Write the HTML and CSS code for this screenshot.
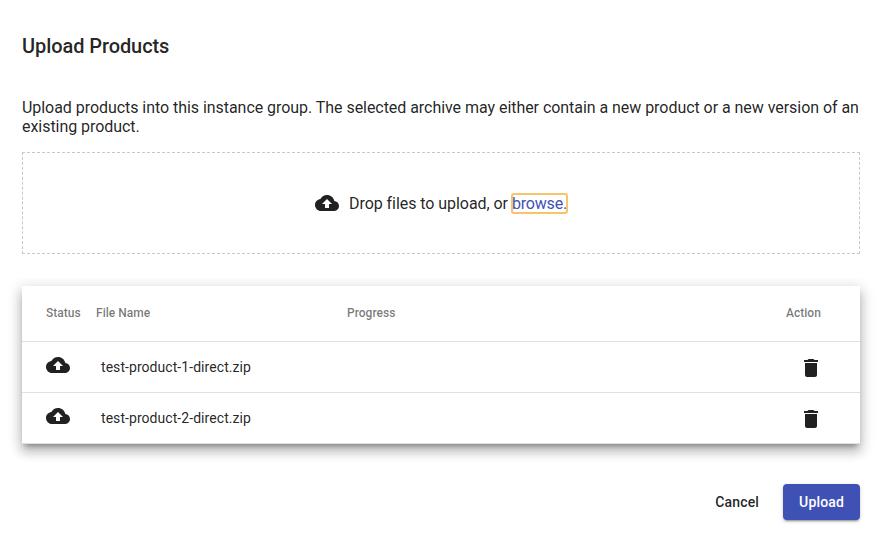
FILE: index.html
```html
<!DOCTYPE html>
<html lang="en">
<head>
<meta charset="utf-8">
<title>Upload Products</title>
<link rel="stylesheet" href="styles.css">
</head>
<body>
<svg class="defs" width="0" height="0" aria-hidden="true">
  <symbol id="cloud" viewBox="0 0 24 24"><path d="M19.35 10.04C18.67 6.59 15.64 4 12 4 9.11 4 6.6 5.64 5.35 8.04 2.34 8.36 0 10.91 0 14c0 3.31 2.69 6 6 6h13c2.76 0 5-2.24 5-5 0-2.64-2.05-4.78-4.65-4.96zM14 13v4h-4v-4H7l5-5 5 5h-3z"/></symbol>
  <symbol id="trash" viewBox="0 0 24 24"><path d="M6 19c0 1.100.9 2 2 2h8c1.100 0 2-.9 2-2V7H6v12zM19 4h-3.500l-1-1h-5l-1 1H5v2h14V4z"/></symbol>
</svg>
<main class="dialog">
  <h1 class="title">Upload Products</h1>
  <p class="intro">Upload products into this instance group. The selected archive may either contain a new product or a new version of an existing product.</p>
  <div class="dropzone">
    <svg class="icon"><use href="#cloud"/></svg>
    <span class="hint">Drop files to upload, or <a class="browse">browse.</a></span>
  </div>
  <section class="files">
    <div class="row head"><span>Status</span><span>File Name</span><span>Progress</span><span>Action</span></div>
    <div class="row"><svg class="icon"><use href="#cloud"/></svg><span class="name">test-product-1-direct.zip</span><span></span><button class="delete" aria-label="Delete"><svg class="icon"><use href="#trash"/></svg></button></div>
    <div class="row"><svg class="icon"><use href="#cloud"/></svg><span class="name">test-product-2-direct.zip</span><span></span><button class="delete" aria-label="Delete"><svg class="icon"><use href="#trash"/></svg></button></div>
  </section>
  <footer class="actions">
    <button class="button">Cancel</button>
    <button class="button primary">Upload</button>
  </footer>
</main>
</body>
</html>
```
FILE: styles.css
```css
* { box-sizing: border-box; }
body { margin: 0; background: #fff; color: rgba(0,0,0,.87); font-family: Roboto, sans-serif; }
.defs { position: absolute; }
.dialog { display: flex; flex-direction: column; padding: 30px 23px 22px 22px; height: 542px; }
.title { margin: 0 0 36px; font-size: 20px; line-height: 32px; font-weight: 500; letter-spacing: -.08px; }
.intro { margin: 0 0 16px; font-size: 16px; line-height: 19px; letter-spacing: -.048px; }
.dropzone { display: flex; align-items: center; justify-content: center; gap: 10px; height: 102px; border: 1px dashed #c8c8c8; font-size: 16px; line-height: 19px; letter-spacing: -.055px; }
.icon { display: block; width: 24px; height: 24px; fill: currentColor; flex: none; }
.browse { color: #3f51b5; letter-spacing: -.18px; outline: 2px solid #f7c46c; outline-offset: -1px; border-radius: 2px; }
.files { margin-top: 32px; background: #fff; box-shadow: 0 5px 5px -3px rgba(0,0,0,.3), 0 8px 10px 1px rgba(0,0,0,.16), 0 3px 14px 2px rgba(0,0,0,.14); clip-path: inset(-8px -23px -30px -22px); }
.row { display: grid; grid-template-columns: 50px 251px 439px 50px; align-items: center; height: 51px; padding-left: 24px; border-bottom: 1px solid #e0e0e0; font-size: 14px; letter-spacing: .06px; }
.row > .icon { margin-top: -5px; }
.head { height: 56px; padding-bottom: 2px; font-size: 12px; font-weight: 500; letter-spacing: .02px; color: rgba(0,0,0,.54); }
.name { padding-left: 5px; }
.delete { border: 0; padding: 0; margin: 2px 0 0 13px; background: none; color: inherit; width: 24px; }
.actions { display: flex; justify-content: flex-end; gap: 8px; margin-top: 40px; }
.button { height: 36px; padding: 0 16px; border: 0; border-radius: 4px; background: none; color: rgba(0,0,0,.87); font: 500 14px/36px Roboto, sans-serif; letter-spacing: .16px; }
.primary { background: #3f51b5; color: #fff; box-shadow: 0 3px 1px -2px rgba(0,0,0,.2), 0 2px 2px rgba(0,0,0,.14), 0 1px 5px rgba(0,0,0,.12); }
```
